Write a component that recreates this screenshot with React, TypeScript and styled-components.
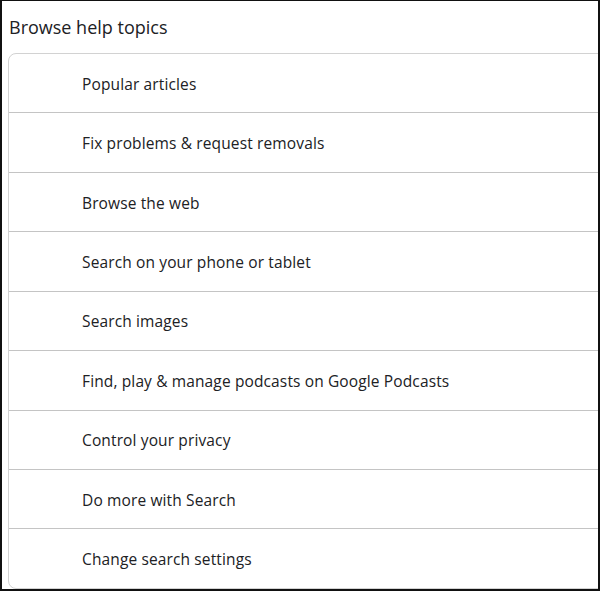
import React from "react";
import styled, { createGlobalStyle } from "styled-components";

const GlobalStyle = createGlobalStyle`
  html, body { margin: 0; padding: 0; background: #ffffff; }
  body { font-family: "Open Sans", "Roboto", sans-serif; color: #202124; }
  * { box-sizing: border-box; }
`;

const Frame = styled.div`
  width: 600px;
  height: 591px;
  border-style: solid;
  border-color: #111111;
  border-width: 1px 2px 2px 2px;
  background: #ffffff;
  overflow: hidden;
  display: flex;
  flex-direction: column;
`;

const Title = styled.h2`
  margin: 0;
  padding: 14px 0 0 7px;
  height: 52px;
  font-family: "Open Sans", sans-serif;
  font-size: 18px;
  font-weight: 400;
  line-height: 24px;
  color: #202124;
`;

const Card = styled.div`
  margin-left: 6px;
  width: 620px;
  border: 1px solid #d2d2d2;
  border-radius: 8px;
  display: flex;
  flex-direction: column;
`;

const Row = styled.div<{ $last?: boolean }>`
  height: ${(p) => (p.$last ? "58.4px" : "59.43px")};
  display: flex;
  align-items: center;
  padding: 1px 0 0 73px;
  border-bottom: ${(p) => (p.$last ? "none" : "1px solid #c4c4c4")};
  font-family: "Open Sans", sans-serif;
  font-size: 15.5px;
  font-weight: 500;
  letter-spacing: 0.13px;
  color: #202124;
`;

const topics = [
  "Popular articles",
  "Fix problems & request removals",
  "Browse the web",
  "Search on your phone or tablet",
  "Search images",
  "Find, play & manage podcasts on Google Podcasts",
  "Control your privacy",
  "Do more with Search",
  "Change search settings",
];

export default function App() {
  return (
    <>
      <GlobalStyle />
      <Frame>
        <Title>Browse help topics</Title>
        <Card>
          {topics.map((t, i) => (
            <Row key={t} $last={i === topics.length - 1}>
              {t}
            </Row>
          ))}
        </Card>
      </Frame>
    </>
  );
}
